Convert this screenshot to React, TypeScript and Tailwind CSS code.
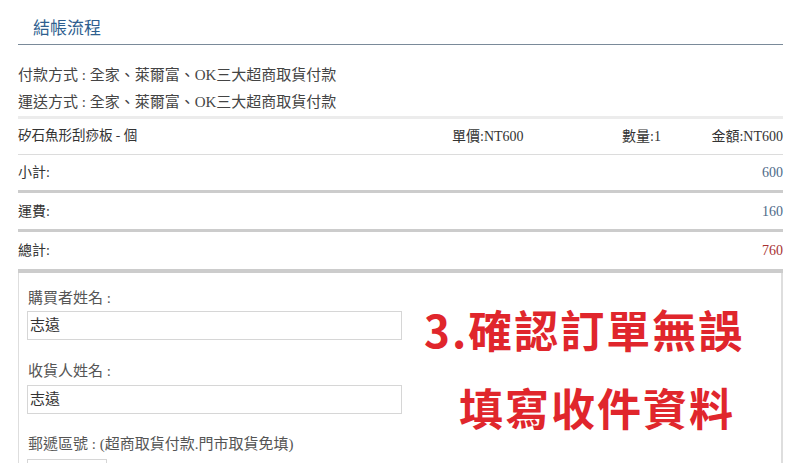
export default function App() {
  const font = { fontFamily: '"Liberation Serif", "Noto Sans CJK TC", serif' };
  return (
    <div className="w-[800px] h-[463px] overflow-hidden bg-white text-[#333]" style={font}>
      <div className="ml-[18px] w-[765px]">
        <div className="h-[45px] border-b border-[#7a8a99] pl-[15px] pt-[16px]">
          <h2 className="text-[17px] leading-[22px] text-[#2f5f8f]" style={{ fontFamily: '"Noto Sans CJK TC", sans-serif' }}>
            結帳流程
          </h2>
        </div>

        <div className="pt-[17px] text-[15px] leading-[27px] text-[#444]">
          <p>付款方式 : 全家、萊爾富、OK三大超商取貨付款</p>
          <p>運送方式 : 全家、萊爾富、OK三大超商取貨付款</p>
        </div>

        <div className="h-[3px] bg-[#ececec]" />

        <div className="flex h-[36px] items-center border-b border-[#dcdcdc] text-[14px]">
          <span className="w-[434px] text-[13.5px]">矽石魚形刮痧板 - 個</span>
          <span className="w-[170px]">單價:NT600</span>
          <span className="flex-1">數量:1</span>
          <span>金額:NT600</span>
        </div>

        <div className="flex h-[38px] items-center justify-between border-b-[3px] border-[#cccccc] text-[14px]">
          <span>小計:</span>
          <span className="text-[#4e6a88]">600</span>
        </div>
        <div className="flex h-[39px] items-center justify-between border-b-[3px] border-[#cccccc] text-[14px]">
          <span>運費:</span>
          <span className="text-[#4e6a88]">160</span>
        </div>
        <div className="flex h-[41px] items-center justify-between border-b-4 border-[#cccccc] text-[14px]">
          <span>總計:</span>
          <span className="text-[#a83232]">760</span>
        </div>

        <div className="flex h-[200px] border-l border-r-2 border-[#dedede] pl-[8px]">
          <div className="w-[375px] pt-[15px] text-[15px]">
            <label className="block pl-[1px] leading-[20px] text-[#555]">購買者姓名 :</label>
            <div className="mt-[3px] flex h-[29px] items-center border border-[#d6d6d6] px-[2px] text-[#333]">志遠</div>
            <label className="mt-[21px] block pl-[1px] leading-[20px] text-[#555]">收貨人姓名 :</label>
            <div className="mt-[4px] flex h-[29px] items-center border border-[#d6d6d6] px-[2px] text-[#333]">志遠</div>
            <label className="mt-[20px] block pl-[1px] leading-[20px] text-[#555]">郵遞區號 : (超商取貨付款.門市取貨免填)</label>
            <div className="mt-[5px] h-[29px] w-[80px] border border-[#d6d6d6]" />
          </div>
          <div
            className="pl-[22px] pt-[17px] text-[44px] font-bold leading-[78px] tracking-[2px] text-[#e0262c]"
            style={{ fontFamily: '"Noto Sans CJK TC", sans-serif' }}
          >
            <p>3.確認訂單無誤</p>
            <p className="pl-[35px]">填寫收件資料</p>
          </div>
        </div>
      </div>
    </div>
  );
}
